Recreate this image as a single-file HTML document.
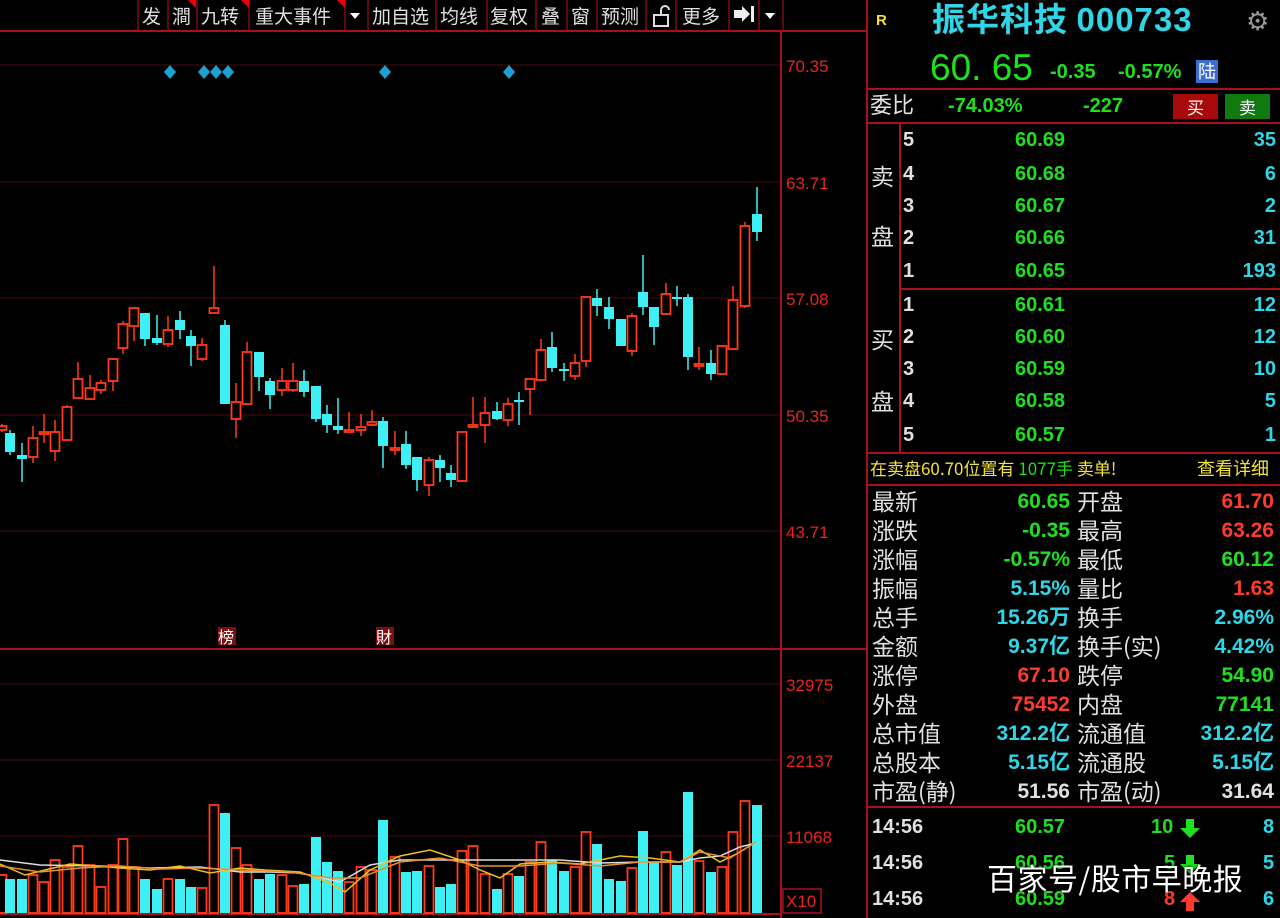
<!DOCTYPE html>
<html><head><meta charset="utf-8">
<style>
*{margin:0;padding:0;box-sizing:border-box}
body{width:1280px;height:918px;background:#000;overflow:hidden;position:relative;font-family:"Liberation Sans","Noto Sans CJK SC",sans-serif}
.t{position:absolute;white-space:nowrap;line-height:1}
.cj{font-family:"Noto Sans CJK SC","WenQuanYi Zen Hei",sans-serif}
.g{color:#1ee01e;font-weight:bold}
.r{color:#ff3b2b;font-weight:bold}
.c{color:#2ed6e8;font-weight:bold}
.w{color:#e0e0e0}
.y{color:#f2e23c}
.hl{position:absolute;height:2px;background:#a8101a}
.vl{position:absolute;width:2px;background:#a8101a}
</style></head><body>
<svg id="ch" width="868" height="918" style="position:absolute;left:0;top:0">
<g stroke="#4a0a0a" stroke-width="1">
<line x1="0" y1="65" x2="780" y2="65"/><line x1="0" y1="182" x2="780" y2="182"/>
<line x1="0" y1="298" x2="780" y2="298"/><line x1="0" y1="415" x2="780" y2="415"/>
<line x1="0" y1="531" x2="780" y2="531"/>
<line x1="0" y1="684" x2="780" y2="684"/><line x1="0" y1="760" x2="780" y2="760"/><line x1="0" y1="836" x2="780" y2="836"/>
</g>
<line x1="0" y1="31" x2="868" y2="31" stroke="#a8101a" stroke-width="2"/>
<line x1="0" y1="649" x2="868" y2="649" stroke="#a8101a" stroke-width="2"/>
<line x1="781" y1="31" x2="781" y2="918" stroke="#a8101a" stroke-width="2"/>
<line x1="0" y1="914" x2="781" y2="914" stroke="#a8101a" stroke-width="2"/>
<line x1="867" y1="0" x2="867" y2="918" stroke="#a8101a" stroke-width="2"/>
<g fill="#e8241c" font-family="Liberation Sans" font-size="17">
<text x="786" y="72">70.35</text><text x="786" y="189">63.71</text><text x="786" y="305">57.08</text>
<text x="786" y="422">50.35</text><text x="786" y="538">43.71</text>
<text x="786" y="691">32975</text><text x="786" y="767">22137</text><text x="786" y="843">11068</text>
<text x="786" y="907">X10</text></g>
<rect x="783" y="889" width="38" height="24" fill="none" stroke="#a8101a" stroke-width="1.5"/>
<g fill="#1ea0d0"><path d="M170 65l6 7-6 7-6-7z"/><path d="M204 65l6 7-6 7-6-7z"/><path d="M216 65l6 7-6 7-6-7z"/><path d="M228 65l6 7-6 7-6-7z"/><path d="M385 65l6 7-6 7-6-7z"/><path d="M509 65l6 7-6 7-6-7z"/></g>
<rect x="218" y="627" width="18" height="18" fill="#7a1010"/><text x="218" y="643" fill="#fff" font-size="16" font-family="Noto Sans CJK SC">榜</text>
<rect x="376" y="627" width="18" height="18" fill="#7a1010"/><text x="376" y="643" fill="#fff" font-size="16" font-family="Noto Sans CJK SC">財</text>
<g id="cd"></g><g id="vb"></g>
<polyline fill="none" stroke="#ddd" stroke-width="1.5" points="0,860 40,865 100,866 150,868 200,867 240,872 270,872 300,873 340,882 370,865 400,860 440,860 480,860 520,860 560,860 600,863 640,862 680,862 700,858 720,856 740,847 756,843"/>
<polyline fill="none" stroke="#e8c020" stroke-width="1.5" points="0,864 25,875 45,870 70,864 95,866 120,868 150,870 180,866 210,873 240,868 265,870 300,872 330,883 345,892 370,870 400,856 430,850 460,860 480,870 500,878 520,864 550,862 580,864 620,856 650,858 680,862 700,850 720,862 740,852 756,842"/>
<polyline fill="none" stroke="#e89030" stroke-width="1.5" points="0,866 40,872 80,868 120,866 160,869 200,868 240,870 290,872 330,878 360,878 400,862 440,858 480,866 520,866 560,863 600,866 640,862 680,862 700,852 730,858 756,842"/>
</svg>
<svg width="790" height="31" style="position:absolute;left:0;top:0" font-family="Noto Sans CJK SC" font-size="19" fill="#e0e0e0">
<g stroke="#7a0c12" stroke-width="1.5" fill="none">
<line x1="138" y1="0" x2="138" y2="30"/><line x1="168" y1="0" x2="168" y2="30"/><line x1="197" y1="0" x2="197" y2="30"/>
<line x1="249" y1="0" x2="249" y2="30"/><line x1="345" y1="0" x2="345" y2="30"/><line x1="368" y1="0" x2="368" y2="30"/>
<line x1="436" y1="0" x2="436" y2="30"/><line x1="487" y1="0" x2="487" y2="30"/><line x1="536" y1="0" x2="536" y2="30"/>
<line x1="567" y1="0" x2="567" y2="30"/><line x1="597" y1="0" x2="597" y2="30"/><line x1="646" y1="0" x2="646" y2="30"/>
<line x1="676" y1="0" x2="676" y2="30"/><line x1="729" y1="0" x2="729" y2="30"/><line x1="759" y1="0" x2="759" y2="30"/>
<line x1="783" y1="0" x2="783" y2="30"/></g>
<path d="M188 0h8v8z M241 0h8v8z M337 0h8v8z" fill="#e00"/>
<text x="142" y="23">发</text><text x="172" y="23">澗</text><text x="201" y="23">九转</text><text x="255" y="23">重大事件</text>
<path d="M350 13h10l-5 6z" fill="#fff"/>
<text x="372" y="23">加自选</text><text x="440" y="23">均线</text><text x="490" y="23">复权</text>
<text x="541" y="23">叠</text><text x="571" y="23">窗</text><text x="601" y="23">预测</text>
<path d="M654 26v-11h14v11z M661 15v-5a4 4 0 0 1 8 0" fill="none" stroke="#ddd" stroke-width="2"/>
<text x="682" y="23">更多</text>
<path d="M734 10h8v-4l8 8-8 8v-4h-8z" fill="#eee"/><rect x="751" y="6" width="3" height="16" fill="#eee"/>
<path d="M765 13h10l-5 6z" fill="#fff"/>
</svg>
<div class="t y" style="left:876px;top:13px;font-size:15px;font-weight:bold">R</div>
<div class="t cj" style="left:932px;top:1px;font-size:33px;color:#2ed6e8;font-weight:bold;letter-spacing:1px">振华科技 <span style="font-family:'Liberation Sans'">000733</span></div>
<div class="t" style="left:1246px;top:8px;font-size:26px;color:#999">⚙</div>
<div class="t g" style="left:930px;top:49px;font-size:37px;font-weight:normal;color:#1ee01e">60. 65</div>
<div class="t g" style="left:1050px;top:62px;font-size:20px">-0.35</div>
<div class="t g" style="left:1118px;top:62px;font-size:20px">-0.57%</div>
<div class="t cj" style="left:1196px;top:60px;width:22px;height:23px;background:#3a6fd0;color:#fff;font-size:18px;text-align:center;line-height:23px">陆</div>
<div class="hl" style="left:868px;top:88px;width:412px"></div>
<div class="t cj w" style="left:870px;top:93px;font-size:22px">委比</div>
<div class="t g" style="left:948px;top:96px;font-size:20px">-74.03%</div>
<div class="t g" style="left:1083px;top:96px;font-size:20px">-227</div>
<div class="t cj" style="left:1173px;top:94px;width:45px;height:25px;background:#a80a0a;color:#fff;font-size:17px;text-align:center;line-height:25px">买</div>
<div class="t cj" style="left:1225px;top:94px;width:45px;height:25px;background:#107a10;color:#fff;font-size:17px;text-align:center;line-height:25px">卖</div>
<div class="hl" style="left:868px;top:122px;width:412px"></div>
<div class="vl" style="left:899px;top:122px;height:330px"></div>
<div class="hl" style="left:899px;top:288px;width:381px"></div>
<div class="t cj w" style="left:871px;top:164px;font-size:23px">卖</div>
<div class="t cj w" style="left:871px;top:224px;font-size:23px">盘</div>
<div class="t cj w" style="left:871px;top:327px;font-size:23px">买</div>
<div class="t cj w" style="left:871px;top:389px;font-size:23px">盘</div>
<div id="ob"></div>
<div class="hl" style="left:868px;top:452px;width:412px"></div>
<div class="t cj y" style="left:870px;top:459px;font-size:17px">在卖盘60.70位置有 <span class="g" style="font-weight:normal">1077手</span> 卖单!</div>
<div class="t cj y" style="left:1197px;top:459px;font-size:18px">查看详细</div>
<div class="hl" style="left:868px;top:484px;width:412px"></div>
<div id="st"></div>
<div class="hl" style="left:868px;top:806px;width:412px"></div>
<div class="t w" style="left:872px;top:817px;font-size:20px;font-weight:bold">14:56</div>
<div class="t g" style="left:1015px;top:817px;font-size:20px">60.57</div>
<div class="t g" style="left:1151px;top:817px;font-size:20px">10</div>
<div class="t c" style="left:1263px;top:817px;font-size:20px">8</div>
<div class="t w" style="left:872px;top:853px;font-size:20px;font-weight:bold">14:56</div>
<div class="t g" style="left:1015px;top:853px;font-size:20px">60.56</div>
<div class="t g" style="left:1164px;top:853px;font-size:20px">5</div>
<div class="t c" style="left:1263px;top:853px;font-size:20px">5</div>
<div class="t w" style="left:872px;top:889px;font-size:20px;font-weight:bold">14:56</div>
<div class="t g" style="left:1015px;top:889px;font-size:20px">60.59</div>
<div class="t r" style="left:1164px;top:889px;font-size:20px">8</div>
<div class="t c" style="left:1263px;top:889px;font-size:20px">6</div>
<svg width="30" height="918" style="position:absolute;left:1178px;top:0">
<path d="M8 819h8v9h6l-10 10-10-10h6z" fill="#1ee01e"/>
<path d="M8 855h8v9h6l-10 10-10-10h6z" fill="#1ee01e"/>
<path d="M12 892l10 10h-6v9h-8v-9h-6z" fill="#ff3b2b"/>
</svg>
<div class="t cj" style="left:987px;top:862px;font-size:30px;color:#fff;text-shadow:0 0 3px #000;letter-spacing:0.5px">百家号/股市早晚报</div>
<script>
var C=[[2,'r',424,426,430,432],[10,'c',430,433,452,455],[22,'c',443,455,459,482],[33,'r',426,438,457,463],[44,'r',414,432,434,443],[55,'r',420,432,451,461],[67,'r',405,407,440,441],[78,'r',362,379,398,398],[90,'r',375,388,399,400],[101,'r',380,383,390,394],[113,'r',358,359,381,391],[123,'r',321,324,348,354],[134,'r',308,308,326,341],[145,'c',313,313,339,346],[157,'c',315,338,343,345],[168,'r',316,330,344,347],[180,'c',311,320,330,339],[191,'c',330,336,346,366],[202,'r',338,345,359,361],[214,'r',266,308,313,313],[225,'c',320,325,404,404],[236,'r',383,402,419,438],[247,'r',342,352,404,404],[259,'c',352,352,377,391],[270,'c',378,381,395,409],[282,'r',368,381,390,396],[293,'r',363,381,390,392],[304,'c',370,381,392,397],[316,'c',386,386,419,422],[327,'c',405,414,425,433],[338,'c',398,426,430,434],[349,'r',412,430,432,433],[361,'r',414,427,430,436],[372,'r',410,422,425,425],[383,'c',417,421,446,468],[395,'r',431,448,450,455],[406,'c',431,444,465,469],[417,'c',457,457,480,491],[429,'r',457,460,485,496],[440,'c',455,460,468,482],[451,'c',465,473,480,487],[462,'r',432,432,481,482],[473,'r',397,425,427,428],[485,'r',397,413,425,443],[497,'c',402,411,419,420],[508,'r',398,404,420,426],[519,'c',392,400,402,425],[530,'r',379,379,389,415],[541,'r',339,350,380,380],[552,'c',332,347,368,372],[564,'c',363,369,371,381],[575,'r',354,363,376,380],[586,'r',297,297,361,367],[597,'c',289,298,306,316],[609,'c',297,307,319,329],[621,'c',319,319,346,346],[632,'r',313,316,351,356],[643,'c',255,292,307,315],[654,'c',307,307,327,345],[666,'r',283,294,314,314],[677,'c',286,297,299,306],[688,'c',294,297,357,370],[699,'r',347,364,366,370],[711,'c',350,363,374,380],[722,'r',346,346,374,374],[733,'r',286,300,349,350],[745,'r',222,226,306,308],[757,'c',187,214,232,241]];
var s='';C.forEach(function(d){var x=d[0],col=d[1]=='r'?'#ff3a1a':'#3ef0f4',h=Math.max(d[4]-d[3],1.5);
s+='<line x1="'+x+'" y1="'+d[2]+'" x2="'+x+'" y2="'+d[5]+'" stroke="'+col+'" stroke-width="1.5"/>';
if(d[1]=='r')s+='<rect x="'+(x-4.5)+'" y="'+d[3]+'" width="9" height="'+h+'" fill="#000" stroke="'+col+'" stroke-width="1.8"/>';
else s+='<rect x="'+(x-5)+'" y="'+d[3]+'" width="10" height="'+h+'" fill="'+col+'"/>';});
document.getElementById('cd').innerHTML=s;
var V=[875,879,879,875,882,860,867,846,865,887,865,839,867,879,889,879,879,887,888,805,813,848,865,879,874,875,886,884,837,862,871,882,867,870,820,857,872,871,866,887,884,851,846,874,889,874,876,862,842,860,871,867,832,844,879,881,868,831,862,852,865,792,861,872,867,832,801,805];
var vs='';for(var i=0;i<V.length&&i<C.length;i++){var x=C[i][0],col=C[i][1];var cc=col=='r'?'#ff3a1a':'#3ef0f4';
if(col=='r')vs+='<rect x="'+(x-4.5)+'" y="'+V[i]+'" width="9" height="'+(913-V[i])+'" fill="#000" stroke="'+cc+'" stroke-width="1.8"/>';
else vs+='<rect x="'+(x-5)+'" y="'+V[i]+'" width="10" height="'+(913-V[i])+'" fill="'+cc+'"/>';}
document.getElementById('vb').innerHTML=vs;
var ob=[['5','60.69','35',140],['4','60.68','6',174],['3','60.67','2',206],['2','60.66','31',238],['1','60.65','193',271],['1','60.61','12',305],['2','60.60','12',337],['3','60.59','10',369],['4','60.58','5',401],['5','60.57','1',435]];
var o='';ob.forEach(function(r){var y=r[3]-10;o+='<div class="t w" style="left:903px;top:'+y+'px;font-size:20px;font-weight:bold">'+r[0]+'</div><div class="t g" style="left:1015px;top:'+y+'px;font-size:20px">'+r[1]+'</div><div class="t c" style="right:4px;top:'+y+'px;font-size:20px">'+r[2]+'</div>';});
document.getElementById('ob').innerHTML=o;
var st=[['最新','60.65','g','开盘','61.70','r'],['涨跌','-0.35','g','最高','63.26','r'],['涨幅','-0.57%','g','最低','60.12','g'],['振幅','5.15%','c','量比','1.63','r'],['总手','15.26万','c','换手','2.96%','c'],['金额','9.37亿','c','换手(实)','4.42%','c'],['涨停','67.10','r','跌停','54.90','g'],['外盘','75452','r','内盘','77141','g'],['总市值','312.2亿','c','流通值','312.2亿','c'],['总股本','5.15亿','c','流通股','5.15亿','c'],['市盈(静)','51.56','w','市盈(动)','31.64','w']];
var q='';st.forEach(function(r,i){var y=489+i*29;
q+='<div class="t cj w" style="left:872px;top:'+y+'px;font-size:23px">'+r[0]+'</div>';
q+='<div class="t '+r[2]+'" style="right:210px;top:'+(y+2)+'px;font-size:21px;'+(r[2]=='w'?'font-weight:bold':'')+'">'+r[1]+'</div>';
q+='<div class="t cj w" style="left:1077px;top:'+y+'px;font-size:23px">'+r[3]+'</div>';
q+='<div class="t '+r[5]+'" style="right:6px;top:'+(y+2)+'px;font-size:21px;'+(r[5]=='w'?'font-weight:bold':'')+'">'+r[4]+'</div>';});
document.getElementById('st').innerHTML=q;
</script>
</body></html>
